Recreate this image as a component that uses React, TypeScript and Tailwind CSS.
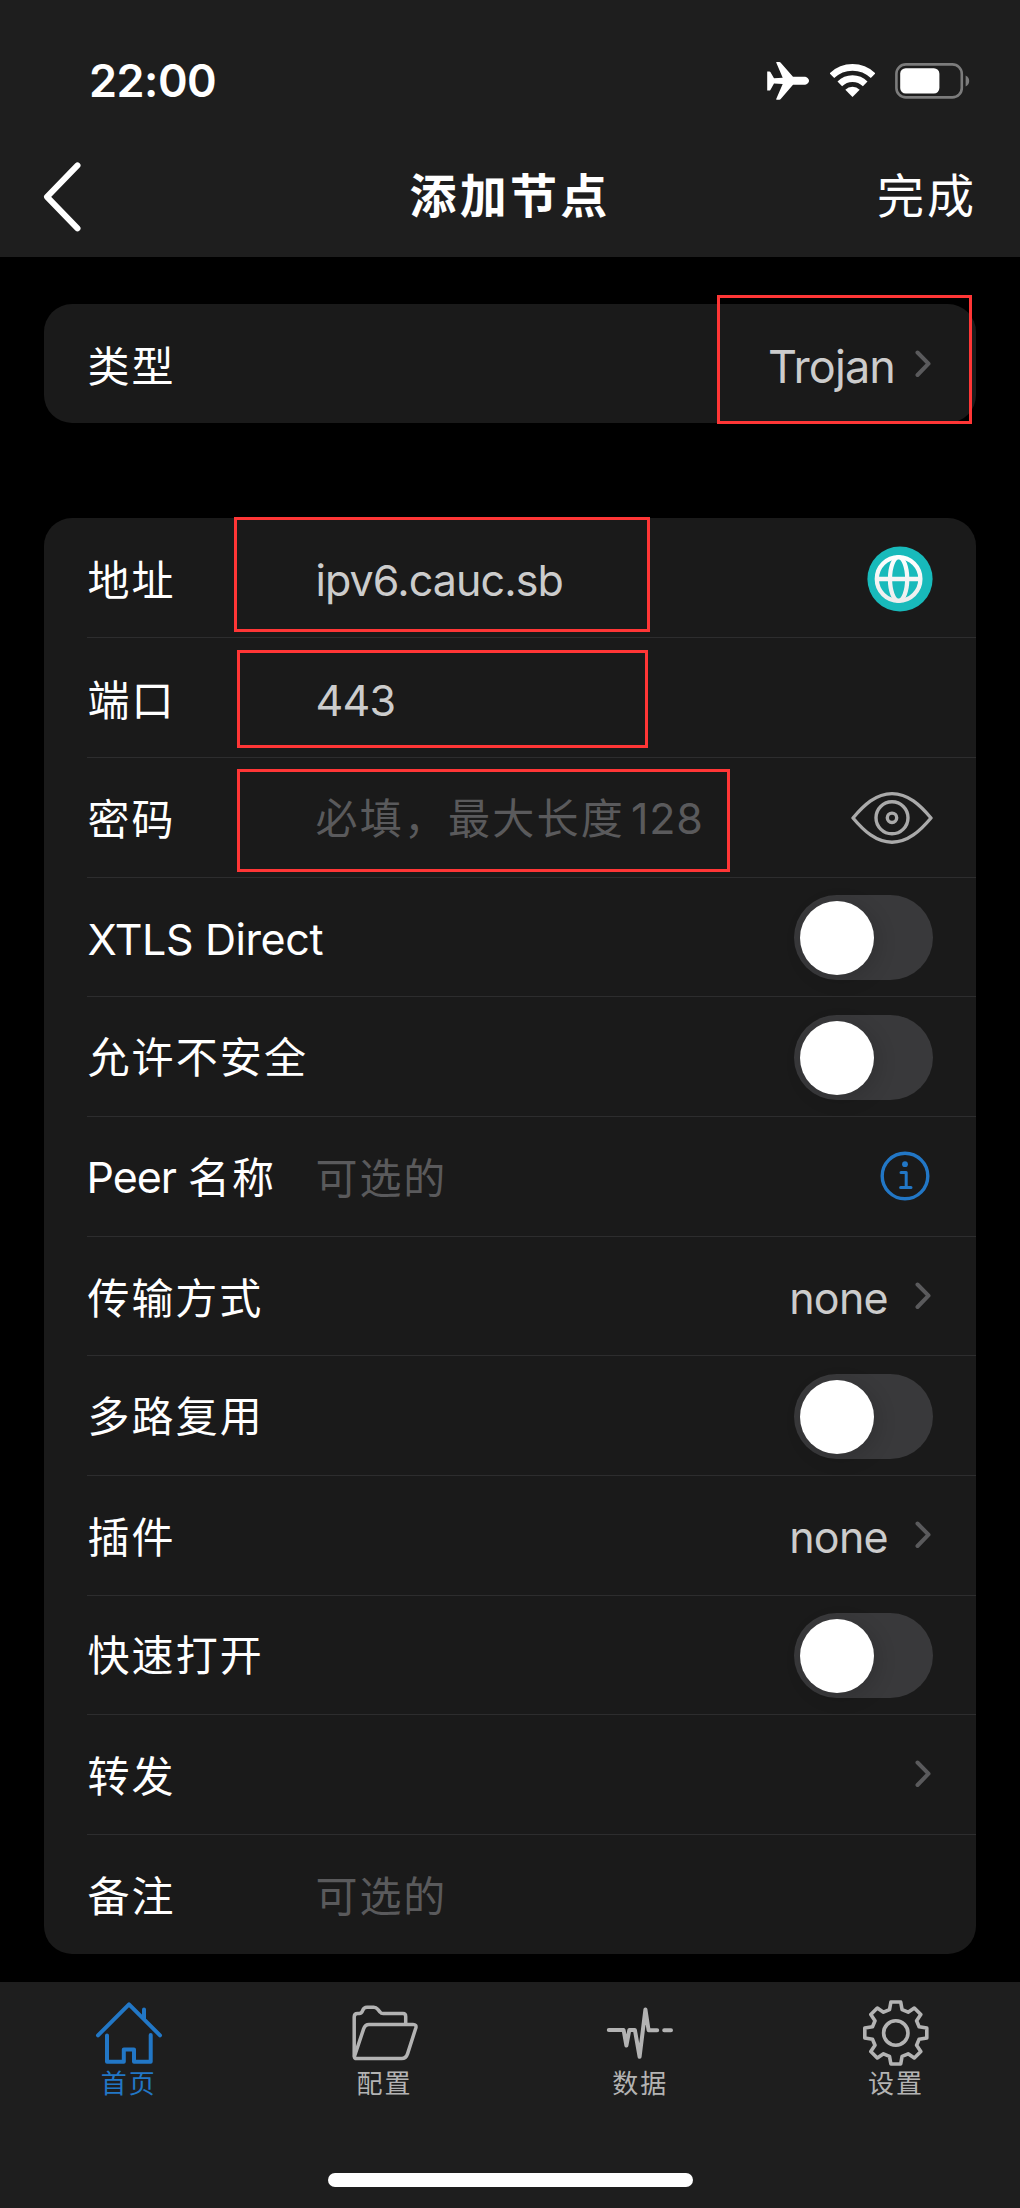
import type { ReactNode } from "react";

const CJK = "font-['Noto_Sans_CJK_SC',sans-serif] whitespace-nowrap";
const LATIN = "font-['Inter',sans-serif] whitespace-nowrap";

function Zh({ children, className = "" }: { children: ReactNode; className?: string }) {
  return <span className={`${CJK} text-[42px] leading-[60px] tracking-[1.9px] ${className}`}>{children}</span>;
}

function En({ children, className = "" }: { children: ReactNode; className?: string }) {
  return <span className={`${LATIN} text-[43px] leading-[60px] ${className}`}>{children}</span>;
}

function Chevron() {
  return (
    <svg className="mr-[2px] h-[28px] w-[16px] shrink-0" viewBox="0 0 16 28" fill="none" stroke="#5a5a5c" strokeWidth="4" strokeLinecap="round" strokeLinejoin="round">
      <path d="M2.5 2.5 13.5 13.7 2.5 25" />
    </svg>
  );
}

function Toggle() {
  return (
    <div className="mt-[2px] flex h-[85px] w-[139px] items-center rounded-full bg-[#39393b] pl-[5.5px]">
      <div className="size-[74px] rounded-full bg-white shadow-[4px_4px_20px_rgba(0,0,0,0.14)]" />
    </div>
  );
}

function GlobeIcon() {
  return (
    <svg className="mt-[2px] size-[66px]" viewBox="0 0 66 66" fill="none">
      <defs>
        <linearGradient id="globe" x1="0" y1="9" x2="0" y2="57" gradientUnits="userSpaceOnUse">
          <stop offset="0" stopColor="#ffffff" />
          <stop offset="1" stopColor="#ececec" />
        </linearGradient>
      </defs>
      <circle cx="33" cy="33" r="32.6" fill="#18babb" />
      <g stroke="url(#globe)" strokeWidth="4.3">
        <circle cx="31.6" cy="33" r="21.8" />
        <ellipse cx="31.6" cy="33" rx="8.6" ry="21.8" />
        <path d="M10 33 53 33.02" />
      </g>
    </svg>
  );
}

function EyeIcon() {
  return (
    <svg className="mt-[2px] h-[54px] w-[82px]" viewBox="0 0 82 54" fill="none" stroke="#aaaaaa" strokeWidth="3.4" strokeLinejoin="round">
      <path d="M2 27C13 14 25 2.6 41 2.6S69 14 80 27C69 40 57 51.2 41 51.2S13 40 2 27Z" />
      <circle cx="41" cy="26.8" r="16" />
      <circle cx="41" cy="26.8" r="4.7" />
    </svg>
  );
}

function InfoIcon() {
  return (
    <svg className="mr-[3px] size-[50px]" viewBox="0 0 50 50" fill="none" stroke="#2277c6" strokeWidth="3.4" strokeLinecap="round" strokeLinejoin="round">
      <circle cx="25" cy="25" r="22.8" />
      <circle cx="25" cy="13.2" r="2.9" fill="#2277c6" stroke="none" />
      <path strokeWidth="3" d="M21 21.6H26.2V36.6M20.6 36.6H31" />
    </svg>
  );
}

function Row({ label, value, right, last }: { label: ReactNode; value?: ReactNode; right?: ReactNode; last?: boolean }) {
  return (
    <div className={`ml-[43px] flex h-[119.67px] items-center border-b pl-[0.5px] pr-[43px] ${last ? "border-transparent" : "border-[#2d2d2e]"}`}>
      <div className="flex w-[228px] shrink-0 items-baseline">{label}</div>
      <div className="flex flex-1 items-baseline">{value}</div>
      {right}
    </div>
  );
}

function NoneValue() {
  return (
    <>
      <En className="mr-[27px] pt-1 tracking-[-0.7px] text-[#cccccc]">none</En>
      <Chevron />
    </>
  );
}

function Highlight({ className }: { className: string }) {
  return <div className={`pointer-events-none absolute border-[3px] border-[#ff3636] ${className}`} />;
}

function HomeIcon() {
  return (
    <svg className="size-[68px]" viewBox="0 0 68 68" fill="none" stroke="currentColor" strokeWidth="4" strokeLinecap="round" strokeLinejoin="round">
      <path d="M3 36.3 34 5.3 65 36.3M49 10.5V20.3M12 36.6V62.8H28.8V50.4H39V62.8H55.7V36" />
    </svg>
  );
}

function FolderIcon() {
  return (
    <svg className="size-[68px]" viewBox="0 0 68 68" fill="none" stroke="currentColor" strokeWidth="3.5" strokeLinecap="round" strokeLinejoin="round">
      <path d="M3.2 57V18Q3.2 14.5 6.6 14.5H8.2Q10.6 14.5 11.6 11.6Q12.7 8.2 16 8.2H22.8Q25 8.2 26.6 10.2L29 13Q30.2 14.6 32.2 14.6H52Q54.7 14.6 54.7 17.4V25" />
      <path d="M3.6 57 12.7 29.6Q14.2 25.4 18 25.4H62Q65.8 25.4 64.8 29L56.6 54.6Q55 59.6 50.6 59.6H6Q2.8 59.6 3.6 57Z" />
    </svg>
  );
}

function PulseIcon() {
  return (
    <svg className="size-[68px]" viewBox="0 0 68 68" fill="none" stroke="currentColor" strokeWidth="4" strokeLinecap="round" strokeLinejoin="round">
      <path d="M2.8 31H17.6L20.4 46.6 23.3 31H28.9L33.6 57.8 39.4 10.4 42.6 31.2H51.2M58.2 31.2H65" />
    </svg>
  );
}

const toothPoints: [number, number][] = [
  [4.9, -31], [6.3, -23.3], [12.3, -20.8], [18.5, -25], [25, -18.5], [20.8, -12.3], [23.3, -6.3], [31, -4.9],
];
const gearPoints = [0, 1, 2, 3].flatMap((quarter) =>
  toothPoints.map(([x, y]) => {
    let px = x;
    let py = y;
    for (let i = 0; i < quarter; i++) [px, py] = [-py, px];
    return `${px + 33.8},${py + 34}`;
  }),
).join(" ");

function GearIcon() {
  return (
    <svg className="size-[68px]" viewBox="0 0 68 68" fill="none" stroke="currentColor" strokeWidth="3.6" strokeLinejoin="round">
      <polygon points={gearPoints} />
      <circle cx="33.8" cy="34" r="12.2" />
    </svg>
  );
}

function Tab({ icon, label, active }: { icon: ReactNode; label: string; active?: boolean }) {
  return (
    <div className={`flex flex-col items-center pt-[17px] ${active ? "text-[#2277c6]" : "text-[#b3b3b3]"}`}>
      {icon}
      <span className={`${CJK} -mt-px text-[26px] leading-[32px] tracking-[2px]`}>{label}</span>
    </div>
  );
}

export default function App() {
  return (
    <div className="flex h-[2208px] w-[1020px] flex-col overflow-hidden bg-black text-white">
      <header className="h-[257px] shrink-0 bg-[#1e1e1e] pt-[32px]">
        <div className="flex h-[97px] items-center justify-between pl-[89px] pr-[50px]">
          <span className={`${LATIN} text-[45px] font-semibold leading-[60px] tracking-[-0.5px]`}>22:00</span>
          <div className="flex items-center">
            <svg className="mr-[21px] h-[38px] w-[42px]" viewBox="0 0 42 38" fill="white">
              <path d="M26 14.7 13.5.4Q13 0 12.5 0H9.6Q9 0 9.2.6L15.7 15.7 7 16.3 3.4 10.1Q3 9.6 2.5 9.6H.2V28.4H2.5Q3 28.4 3.4 27.9L7 21.4 15.7 22 9.2 37.1Q9 37.7 9.6 37.7H12.5Q13 37.7 13.5 37.3L26 22.7H37C40 22.7 42 20.5 42 18.7 42 16.8 40 14.7 37 14.7Z" />
            </svg>
            <svg className="mr-[20px] h-[35px] w-[45px]" viewBox="0 0 45 35" fill="none" stroke="white" strokeWidth="6.6">
              <path d="M1.9 12.7A29.6 29.6 0 0 1 43.1 12.7M9.8 20.8A18.2 18.2 0 0 1 35.2 20.8" />
              <path d="M15.3 26.8A10.2 10.2 0 0 1 29.7 26.8L22.5 34Z" fill="white" stroke="none" />
            </svg>
            <svg className="h-[36px] w-[75px]" viewBox="0 0 75 36" fill="none">
              <rect x="1.4" y="1.4" width="65.4" height="33" rx="9.5" stroke="#7c7c7c" strokeWidth="2.6" />
              <rect x="5.2" y="5.2" width="39.2" height="25.4" rx="5.5" fill="white" />
              <path d="M70.6 12.6C75.4 14.6 75.4 21.4 70.6 23.4Z" fill="#7c7c7c" />
            </svg>
          </div>
        </div>
        <div className="grid h-[128px] grid-cols-3 items-center pl-[43px] pr-[43px]">
          <svg className="mt-[7px] h-[72px] w-[40px]" viewBox="0 0 40 72" fill="none" stroke="white" strokeWidth="6" strokeLinecap="round" strokeLinejoin="round">
            <path d="M34.5 4.4 4 35.8 34.5 67.4" />
          </svg>
          <h1 className={`${CJK} text-center text-[47px] font-bold leading-[64px] tracking-[3.2px]`}>添加节点</h1>
          <span className={`${CJK} text-right text-[47px] leading-[64px] tracking-[3px]`}>完成</span>
        </div>
      </header>

      <main className="relative h-[1725px] shrink-0 px-[44px] pt-[47px]">
        <section className="flex h-[119px] items-center rounded-[28px] bg-[#1a1a1a] pl-[43.5px] pr-[43px]">
          <Zh className="flex-1">类型</Zh>
          <span className={`${LATIN} mr-[20px] pt-[6px] text-[45px] leading-[60px] tracking-[-0.9px] text-[#cccccc]`}>Trojan</span>
          <Chevron />
        </section>

        <section className="mt-[95px] h-[1436px] overflow-hidden rounded-[28px] bg-[#1a1a1a] pt-[0.6px]">
          <Row label={<Zh>地址</Zh>} value={<En className="pt-1 tracking-[-0.9px] text-[#cccccc]">ipv6.cauc.sb</En>} right={<GlobeIcon />} />
          <Row label={<Zh>端口</Zh>} value={<En className="pt-1 tracking-[-0.8px] text-[#cccccc]">443</En>} />
          <Row
            label={<Zh>密码</Zh>}
            value={
              <>
                <Zh className="tracking-[2.2px] text-[#5a5a5c]">必填，最大长度</Zh>
                <En className="ml-[6px] tracking-[0.8px] text-[#5a5a5c]">128</En>
              </>
            }
            right={<EyeIcon />}
          />
          <Row label={<En className="pt-1 tracking-[-0.4px]">XTLS Direct</En>} right={<Toggle />} />
          <Row label={<Zh className="pb-1 tracking-[2.1px]">允许不安全</Zh>} right={<Toggle />} />
          <Row
            label={
              <>
                <En className="-ml-px mr-[12px] tracking-[-1px]">Peer</En>
                <Zh>名称</Zh>
              </>
            }
            value={<Zh className="text-[#5a5a5c]">可选的</Zh>}
            right={<InfoIcon />}
          />
          <Row label={<Zh>传输方式</Zh>} right={<NoneValue />} />
          <Row label={<Zh className="pb-1 tracking-[2.1px]">多路复用</Zh>} right={<Toggle />} />
          <Row label={<Zh>插件</Zh>} right={<NoneValue />} />
          <Row label={<Zh className="pb-1 tracking-[2.1px]">快速打开</Zh>} right={<Toggle />} />
          <Row label={<Zh>转发</Zh>} right={<Chevron />} />
          <Row label={<Zh>备注</Zh>} value={<Zh className="text-[#5a5a5c]">可选的</Zh>} last />
        </section>

        <Highlight className="left-[717px] top-[38px] h-[129px] w-[255px]" />
        <Highlight className="left-[234px] top-[260px] h-[115px] w-[416px]" />
        <Highlight className="left-[237px] top-[393px] h-[98px] w-[411px]" />
        <Highlight className="left-[237px] top-[512px] h-[103px] w-[493px]" />
      </main>

      <footer className="flex h-[226px] shrink-0 flex-col items-center justify-between bg-[#1e1e1e] pb-[21px]">
        <nav className="ml-[5px] grid w-[1023px] grid-cols-4">
          <Tab icon={<HomeIcon />} label="首页" active />
          <Tab icon={<FolderIcon />} label="配置" />
          <Tab icon={<PulseIcon />} label="数据" />
          <Tab icon={<GearIcon />} label="设置" />
        </nav>
        <div className="h-[14px] w-[365px] rounded-full bg-white" />
      </footer>
    </div>
  );
}
